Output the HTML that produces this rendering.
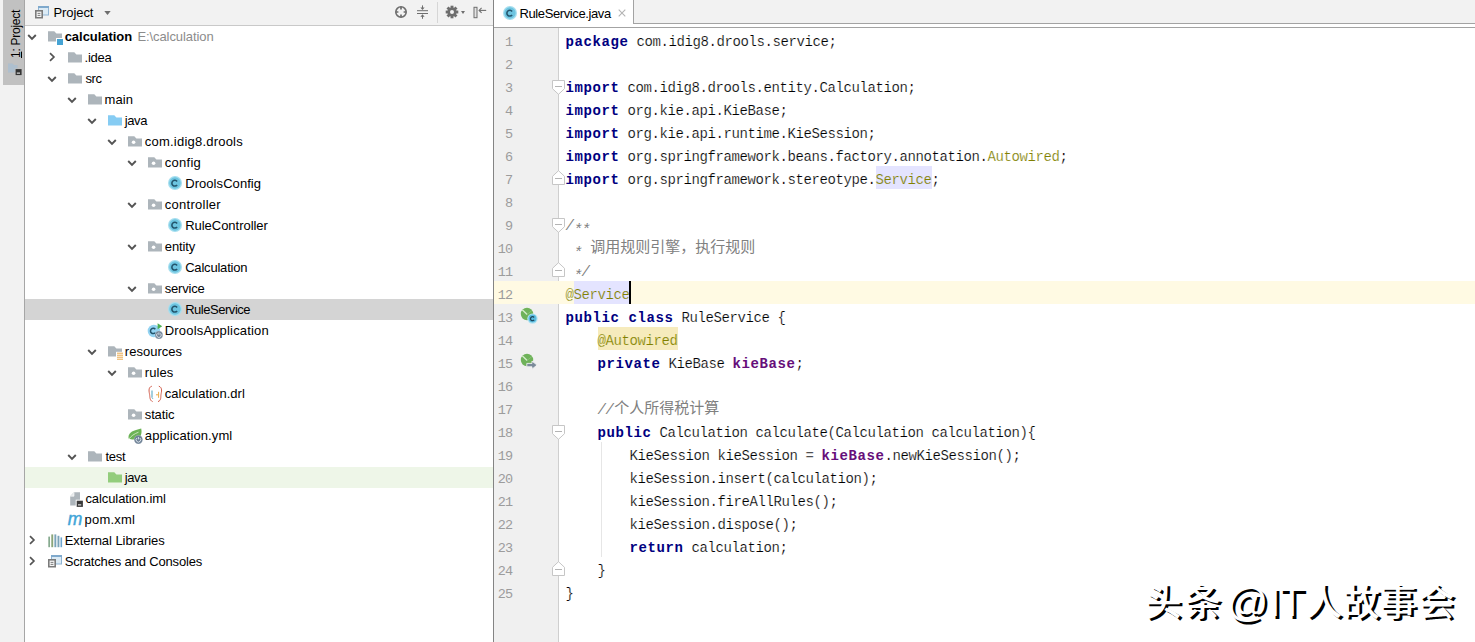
<!DOCTYPE html><html><head><meta charset="utf-8"><title>IDE</title><style>
html,body{margin:0;padding:0;background:#fff}
body{width:1475px;height:642px;position:relative;overflow:hidden;font-family:"Liberation Sans",sans-serif}
.a{position:absolute}
.t{font-size:13px;line-height:21px;height:21px;white-space:pre;color:#000}
.b{font-weight:700}
.cl,.ln{font-family:"Liberation Mono",monospace;font-size:14px;letter-spacing:-0.4px;line-height:29px;height:23px;white-space:pre;color:#000}
.cl>span,.cl{padding-top:0}
.cl{-webkit-text-stroke:0.2px #fff}
.k,.f,.c{-webkit-text-stroke-width:0}
.hl,.hl2{-webkit-text-stroke-color:#e4e4ff}
.hw{-webkit-text-stroke-color:#f6ebbc}
.ln{width:18.2px;text-align:right;color:#9c9c9c;font-size:13.5px;letter-spacing:-0.9px}
.k{color:#000080;font-weight:700;letter-spacing:0.6px}
.an{color:#808000}
.f{color:#660e7a;font-weight:700;letter-spacing:0.6px}
.c{color:#808080;font-style:italic}
.cl span.as{position:relative;top:3.5px;font-size:15px;letter-spacing:-1px;width:8px}
.hl{background:#e4e4ff}
.hl2{background:#e4e4ff}
.hw{background:#f6ebbc}
.cl span{display:inline-block;height:23px;vertical-align:top}
.cj{vertical-align:top;margin-top:3px}
.cj text{font-family:"Liberation Sans","Noto Sans CJK SC",sans-serif;font-size:15px;font-style:normal;font-weight:400;letter-spacing:0;-webkit-text-stroke:0;stroke:none}
.wm{font-family:"Liberation Sans","Noto Sans CJK SC",sans-serif;font-size:37px;font-weight:500;letter-spacing:0}
</style></head><body>
<div class="a" style="left:0;top:0;width:24px;height:642px;background:#f2f2f2"></div>
<div class="a" style="left:3px;top:0;width:21px;height:85px;background:#c1c1c1"></div>
<div class="a" style="left:24px;top:0;width:1px;height:642px;background:#a6a6a6"></div>
<div class="a" id="vtab" style="left:8.6px;top:58.3px;width:0;height:0"><span class="a" style="left:0;top:0;transform-origin:0 0;transform:rotate(-90deg);font-size:12px;line-height:14px;height:14px;white-space:pre;letter-spacing:-0.27px"><u>1</u>: Project</span></div>
<svg class="a" style="left:7.5px;top:62.5px" width="14" height="13" viewBox="0 0 14 13"><path d="M0 0.5H4.5L6 2H9.5V9.5H0Z" fill="#a7bdd2" fill-opacity="0.75"/><rect x="6.8" y="5.3" width="7" height="7" fill="#c2c2c2"/><rect x="7.6" y="6.1" width="6" height="6" fill="#333"/><rect x="8.8" y="9.6" width="3.2" height="1" fill="#fff"/></svg>
<div class="a" style="left:25px;top:0;width:468px;height:25px;background:#f2f2f2"></div>
<div class="a" style="left:25px;top:25px;width:468px;height:1px;background:#c9c9c9"></div>
<svg class="a" style="left:35px;top:5.7px" width="15" height="13" viewBox="0 0 15 13"><rect x="3.5" y="0.5" width="10" height="8.5" fill="#dcebf5" stroke="#8fb4d4" stroke-width="1"/><rect x="3" y="0" width="11" height="2" fill="#7fa9cc"/><rect x="0" y="4" width="8" height="8.5" fill="#7b7b7b"/><rect x="1.6" y="5.6" width="4.8" height="5.4" fill="#f4f4f4"/><path d="M2.6 7.4H5.4M2.6 9.4H5.4" stroke="#6e6e6e" stroke-width="0.9"/></svg>
<span class="a t" id="hproj" style="left:53.54px;top:2px;letter-spacing:-0.090px">Project</span>
<svg class="a" style="left:104px;top:11px" width="7" height="4" viewBox="0 0 7 4"><path d="M0.3 0H6.7L3.5 4Z" fill="#6e6e6e"/></svg>
<svg class="a" style="left:394px;top:5px" width="14" height="14" viewBox="0 0 14 14"><circle cx="7" cy="7" r="5.2" fill="none" stroke="#6e6e6e" stroke-width="1.6"/><path d="M7 1.8V4.4M7 9.6V12.2M1.8 7H4.4M9.6 7H12.2" stroke="#6e6e6e" stroke-width="1.7"/></svg>
<svg class="a" style="left:416px;top:5px" width="13" height="14" viewBox="0 0 13 14"><path d="M1 5.7H12M1 8.5H12" stroke="#6e6e6e" stroke-width="1"/><path d="M6.5 0.4V4M6.5 10.2V13.8" stroke="#6e6e6e" stroke-width="1"/><path d="M4.4 2.4L6.5 4.9L8.6 2.4ZM4.4 11.8L6.5 9.3L8.6 11.8Z" fill="#6e6e6e"/></svg>
<div class="a" style="left:437px;top:2px;width:1px;height:21px;background:#d6d6d6"></div>
<svg class="a" style="left:444.8px;top:4.9px" width="14" height="14" viewBox="-7 -7 14 14"><g fill="#6e6e6e"><rect x="-1.45" y="-6.3" width="2.9" height="3.2" transform="rotate(0)"/><rect x="-1.45" y="-6.3" width="2.9" height="3.2" transform="rotate(45)"/><rect x="-1.45" y="-6.3" width="2.9" height="3.2" transform="rotate(90)"/><rect x="-1.45" y="-6.3" width="2.9" height="3.2" transform="rotate(135)"/><rect x="-1.45" y="-6.3" width="2.9" height="3.2" transform="rotate(180)"/><rect x="-1.45" y="-6.3" width="2.9" height="3.2" transform="rotate(225)"/><rect x="-1.45" y="-6.3" width="2.9" height="3.2" transform="rotate(270)"/><rect x="-1.45" y="-6.3" width="2.9" height="3.2" transform="rotate(315)"/></g><circle r="3.3" fill="none" stroke="#6e6e6e" stroke-width="2.6"/></svg>
<svg class="a" style="left:460.5px;top:11px" width="4" height="3" viewBox="0 0 4 3"><path d="M0 0H4L2 3Z" fill="#6e6e6e"/></svg>
<svg class="a" style="left:473px;top:6px" width="14" height="13" viewBox="0 0 14 13"><rect x="1" y="1.3" width="3" height="10.4" fill="#e4e4e4" stroke="#6e6e6e" stroke-width="1"/><path d="M6.2 4.4H13.2" stroke="#6e6e6e" stroke-width="1.1"/><path d="M8.6 1.9L6.1 4.4L8.6 6.9" stroke="#6e6e6e" stroke-width="1.1" fill="none"/></svg>
<svg class="a" style="left:26.299999999999997px;top:31.700000000000003px" width="12" height="10" viewBox="0 0 12 10"><path d="M2.2 3 L6 6.9 L9.8 3" fill="none" stroke="#545454" stroke-width="1.9"/></svg>
<svg class="a" style="left:48px;top:30.5px" width="18" height="16" viewBox="0 0 18 16"><path d="M0 0.2 H6.3 L8.4 2.4 H14 V10.6 H0 Z" fill="#adb5bb"/><rect x="8" y="7" width="7.5" height="7.5" fill="#fff"/><rect x="9" y="8" width="6" height="6" fill="#45a3d4"/></svg>
<span class="a t b" id="r0" style="left:64.68px;top:26px;letter-spacing:-0.036px">calculation</span>
<span class="a t" id="rpath" style="left:137.42px;top:26px;color:#8c8c8c;letter-spacing:-0.083px">E:\calculation</span>
<svg class="a" style="left:46.6px;top:51.3px" width="10" height="12" viewBox="0 0 10 12"><path d="M3 2.2 L6.9 6 L3 9.8" fill="none" stroke="#545454" stroke-width="1.7"/></svg>
<svg class="a" style="left:68px;top:51.5px" width="18" height="16" viewBox="0 0 18 16"><path d="M0 0.2 H6.3 L8.4 2.4 H14 V10.6 H0 Z" fill="#adb5bb"/></svg>
<span class="a t" id="r1" style="left:84.54px;top:47px;letter-spacing:-0.225px">.idea</span>
<svg class="a" style="left:46.3px;top:73.7px" width="12" height="10" viewBox="0 0 12 10"><path d="M2.2 3 L6 6.9 L9.8 3" fill="none" stroke="#545454" stroke-width="1.9"/></svg>
<svg class="a" style="left:68px;top:72.5px" width="18" height="16" viewBox="0 0 18 16"><path d="M0 0.2 H6.3 L8.4 2.4 H14 V10.6 H0 Z" fill="#adb5bb"/></svg>
<span class="a t" id="r2" style="left:85.44px;top:68px;letter-spacing:-0.360px">src</span>
<svg class="a" style="left:66.3px;top:94.7px" width="12" height="10" viewBox="0 0 12 10"><path d="M2.2 3 L6 6.9 L9.8 3" fill="none" stroke="#545454" stroke-width="1.9"/></svg>
<svg class="a" style="left:88px;top:93.5px" width="18" height="16" viewBox="0 0 18 16"><path d="M0 0.2 H6.3 L8.4 2.4 H14 V10.6 H0 Z" fill="#adb5bb"/></svg>
<span class="a t" id="r3" style="left:104.54px;top:89px;letter-spacing:0.060px">main</span>
<svg class="a" style="left:86.3px;top:115.7px" width="12" height="10" viewBox="0 0 12 10"><path d="M2.2 3 L6 6.9 L9.8 3" fill="none" stroke="#545454" stroke-width="1.9"/></svg>
<svg class="a" style="left:108px;top:114.5px" width="18" height="16" viewBox="0 0 18 16"><path d="M0 0.2 H6.3 L8.4 2.4 H14 V10.6 H0 Z" fill="#86ccf3"/></svg>
<span class="a t" id="r4" style="left:124.70px;top:110px;letter-spacing:-0.360px">java</span>
<svg class="a" style="left:106.3px;top:136.7px" width="12" height="10" viewBox="0 0 12 10"><path d="M2.2 3 L6 6.9 L9.8 3" fill="none" stroke="#545454" stroke-width="1.9"/></svg>
<svg class="a" style="left:128px;top:135.5px" width="18" height="16" viewBox="0 0 18 16"><path d="M0 0.2 H6.3 L8.4 2.4 H14 V10.6 H0 Z" fill="#adb5bb"/><circle cx="5.6" cy="6.3" r="1.8" fill="#fff"/></svg>
<span class="a t" id="r5" style="left:144.80px;top:131px;letter-spacing:0.216px">com.idig8.drools</span>
<svg class="a" style="left:126.30000000000001px;top:157.7px" width="12" height="10" viewBox="0 0 12 10"><path d="M2.2 3 L6 6.9 L9.8 3" fill="none" stroke="#545454" stroke-width="1.9"/></svg>
<svg class="a" style="left:148px;top:156.5px" width="18" height="16" viewBox="0 0 18 16"><path d="M0 0.2 H6.3 L8.4 2.4 H14 V10.6 H0 Z" fill="#adb5bb"/><circle cx="5.6" cy="6.3" r="1.8" fill="#fff"/></svg>
<span class="a t" id="r6" style="left:164.80px;top:152px;letter-spacing:0.252px">config</span>
<svg class="a" style="left:168.2px;top:176.4px" width="14" height="14" viewBox="0 0 14 14"><circle cx="7" cy="7" r="7" fill="#a5deef"/><circle cx="7" cy="7" r="5.7" fill="#6cc4e0"/><path d="M9.1 5.4 A2.9 2.9 0 1 0 9.1 8.9" fill="none" stroke="#23556d" stroke-width="1.6"/></svg>
<span class="a t" id="r7" style="left:185.18px;top:173px;letter-spacing:0.065px">DroolsConfig</span>
<svg class="a" style="left:126.30000000000001px;top:199.7px" width="12" height="10" viewBox="0 0 12 10"><path d="M2.2 3 L6 6.9 L9.8 3" fill="none" stroke="#545454" stroke-width="1.9"/></svg>
<svg class="a" style="left:148px;top:198.5px" width="18" height="16" viewBox="0 0 18 16"><path d="M0 0.2 H6.3 L8.4 2.4 H14 V10.6 H0 Z" fill="#adb5bb"/><circle cx="5.6" cy="6.3" r="1.8" fill="#fff"/></svg>
<span class="a t" id="r8" style="left:164.80px;top:194px;letter-spacing:0.260px">controller</span>
<svg class="a" style="left:168.2px;top:218.4px" width="14" height="14" viewBox="0 0 14 14"><circle cx="7" cy="7" r="7" fill="#a5deef"/><circle cx="7" cy="7" r="5.7" fill="#6cc4e0"/><path d="M9.1 5.4 A2.9 2.9 0 1 0 9.1 8.9" fill="none" stroke="#23556d" stroke-width="1.6"/></svg>
<span class="a t" id="r9" style="left:185.18px;top:215px;letter-spacing:-0.028px">RuleController</span>
<svg class="a" style="left:126.30000000000001px;top:241.7px" width="12" height="10" viewBox="0 0 12 10"><path d="M2.2 3 L6 6.9 L9.8 3" fill="none" stroke="#545454" stroke-width="1.9"/></svg>
<svg class="a" style="left:148px;top:240.5px" width="18" height="16" viewBox="0 0 18 16"><path d="M0 0.2 H6.3 L8.4 2.4 H14 V10.6 H0 Z" fill="#adb5bb"/><circle cx="5.6" cy="6.3" r="1.8" fill="#fff"/></svg>
<span class="a t" id="r10" style="left:164.80px;top:236px;letter-spacing:-0.144px">entity</span>
<svg class="a" style="left:168.2px;top:260.4px" width="14" height="14" viewBox="0 0 14 14"><circle cx="7" cy="7" r="7" fill="#a5deef"/><circle cx="7" cy="7" r="5.7" fill="#6cc4e0"/><path d="M9.1 5.4 A2.9 2.9 0 1 0 9.1 8.9" fill="none" stroke="#23556d" stroke-width="1.6"/></svg>
<span class="a t" id="r11" style="left:185.18px;top:257px;letter-spacing:-0.198px">Calculation</span>
<svg class="a" style="left:126.30000000000001px;top:283.7px" width="12" height="10" viewBox="0 0 12 10"><path d="M2.2 3 L6 6.9 L9.8 3" fill="none" stroke="#545454" stroke-width="1.9"/></svg>
<svg class="a" style="left:148px;top:282.5px" width="18" height="16" viewBox="0 0 18 16"><path d="M0 0.2 H6.3 L8.4 2.4 H14 V10.6 H0 Z" fill="#adb5bb"/><circle cx="5.6" cy="6.3" r="1.8" fill="#fff"/></svg>
<span class="a t" id="r12" style="left:164.80px;top:278px;letter-spacing:-0.210px">service</span>
<div class="a" style="left:25px;top:299px;width:468px;height:21px;background:#d4d4d4"></div>
<svg class="a" style="left:168.2px;top:302.4px" width="14" height="14" viewBox="0 0 14 14"><circle cx="7" cy="7" r="7" fill="#a5deef"/><circle cx="7" cy="7" r="5.7" fill="#6cc4e0"/><path d="M9.1 5.4 A2.9 2.9 0 1 0 9.1 8.9" fill="none" stroke="#23556d" stroke-width="1.6"/></svg>
<span class="a t" id="r13" style="left:185.18px;top:299px;letter-spacing:-0.468px">RuleService</span>
<svg class="a" style="left:147px;top:321.5px" width="18" height="18" viewBox="0 0 18 18"><circle cx="6.9" cy="9" r="6.2" fill="#93d3f2"/><path d="M8.3 7.2 A2.7 2.7 0 1 0 8.3 10.6" fill="none" stroke="#23556d" stroke-width="1.5"/><path d="M10.6 1.2 L15.2 4.2 L10.6 7.2Z" fill="#4caf50"/><circle cx="11.9" cy="13" r="3.9" fill="#6f8296"/><circle cx="11.9" cy="13" r="3.9" fill="none" stroke="#fff" stroke-opacity="0.35" stroke-width="0.6"/><path d="M10.4 11.4 A2.3 2.3 0 1 0 13.4 11.4" fill="none" stroke="#e4ebf2" stroke-width="0.9"/><path d="M11.9 10.4V12.8" stroke="#e4ebf2" stroke-width="0.9"/></svg>
<span class="a t" id="r14" style="left:164.80px;top:320px;letter-spacing:0.169px">DroolsApplication</span>
<svg class="a" style="left:86.3px;top:346.7px" width="12" height="10" viewBox="0 0 12 10"><path d="M2.2 3 L6 6.9 L9.8 3" fill="none" stroke="#545454" stroke-width="1.9"/></svg>
<svg class="a" style="left:108px;top:345.5px" width="18" height="16" viewBox="0 0 18 16"><path d="M0 0.2 H6.3 L8.4 2.4 H14 V10.6 H0 Z" fill="#adb5bb"/><rect x="8" y="5.8" width="8" height="9" fill="#fff"/><path d="M9 7.2H15M9 9.2H15M9 11.2H15M9 13.2H15" stroke="#e8a84c" stroke-width="1"/></svg>
<span class="a t" id="r15" style="left:124.80px;top:341px;letter-spacing:0.022px">resources</span>
<svg class="a" style="left:106.3px;top:367.7px" width="12" height="10" viewBox="0 0 12 10"><path d="M2.2 3 L6 6.9 L9.8 3" fill="none" stroke="#545454" stroke-width="1.9"/></svg>
<svg class="a" style="left:128px;top:366.5px" width="18" height="16" viewBox="0 0 18 16"><path d="M0 0.2 H6.3 L8.4 2.4 H14 V10.6 H0 Z" fill="#adb5bb"/><circle cx="5.6" cy="6.3" r="1.8" fill="#fff"/></svg>
<span class="a t" id="r16" style="left:144.80px;top:362px;letter-spacing:0.045px">rules</span>
<svg class="a" style="left:147px;top:384.5px" width="17" height="18" viewBox="0 0 17 18"><path d="M4.8 1.2 C0.8 2.5 2.2 7 2.6 9.5 C3 12 2.6 15.5 5.6 16.6" fill="none" stroke="#d25a48" stroke-width="1"/><path d="M11.8 1.2 C15.8 2.5 14.4 7 14 9.5 C13.6 12 14.4 15.5 11 16.6" fill="none" stroke="#d25a48" stroke-width="1"/><path d="M5 5.5 V12.5" stroke="#55a8c4" stroke-width="1.1"/><path d="M5 12.5 L6 14" stroke="#55a8c4" stroke-width="0.8"/><path d="M9 9.8H11.2M11.6 6.8V12.8" stroke="#e9a947" stroke-width="1"/></svg>
<span class="a t" id="r17" style="left:164.80px;top:383px;letter-spacing:0.039px">calculation.drl</span>
<svg class="a" style="left:128px;top:408.5px" width="18" height="16" viewBox="0 0 18 16"><path d="M0 0.2 H6.3 L8.4 2.4 H14 V10.6 H0 Z" fill="#adb5bb"/><circle cx="5.6" cy="6.3" r="1.8" fill="#fff"/></svg>
<span class="a t" id="r18" style="left:144.80px;top:404px;letter-spacing:-0.144px">static</span>
<svg class="a" style="left:128px;top:426.5px" width="18" height="18" viewBox="0 0 18 18"><path d="M0.6 11.6 C-0.4 5.5 5 3.6 13.2 1.6 C14.4 6.5 12.6 12.6 5.4 12.6 C3.6 12.6 2.2 12.4 0.6 11.6Z" fill="#6cb356"/><path d="M0.8 12.2 C3 9 6 7 10.5 5.2" stroke="#dff0d6" stroke-width="0.8" fill="none"/><circle cx="10.4" cy="12.6" r="4.3" fill="#6f8296"/><circle cx="10.4" cy="12.6" r="4.3" fill="none" stroke="#fff" stroke-opacity="0.35" stroke-width="0.6"/><path d="M8.9 11.0 A2.3 2.3 0 1 0 11.9 11.0" fill="none" stroke="#e4ebf2" stroke-width="0.9"/><path d="M10.4 10.0V12.4" stroke="#e4ebf2" stroke-width="0.9"/></svg>
<span class="a t" id="r19" style="left:144.80px;top:425px;letter-spacing:0.103px">application.yml</span>
<svg class="a" style="left:66.3px;top:451.7px" width="12" height="10" viewBox="0 0 12 10"><path d="M2.2 3 L6 6.9 L9.8 3" fill="none" stroke="#545454" stroke-width="1.9"/></svg>
<svg class="a" style="left:88px;top:450.5px" width="18" height="16" viewBox="0 0 18 16"><path d="M0 0.2 H6.3 L8.4 2.4 H14 V10.6 H0 Z" fill="#adb5bb"/></svg>
<span class="a t" id="r20" style="left:105.44px;top:446px;letter-spacing:-0.240px">test</span>
<div class="a" style="left:25px;top:467px;width:468px;height:21px;background:#eef6e8"></div>
<svg class="a" style="left:108px;top:471.5px" width="18" height="16" viewBox="0 0 18 16"><path d="M0 0.2 H6.3 L8.4 2.4 H14 V10.6 H0 Z" fill="#93cd7c"/></svg>
<span class="a t" id="r21" style="left:124.70px;top:467px;letter-spacing:-0.360px">java</span>
<svg class="a" style="left:70px;top:491.7px" width="14" height="17" viewBox="0 0 14 17"><path d="M0.2 4.2 L4 0.3 H10 V13.6 H0.2 Z" fill="#adb5bb"/><path d="M0.2 4.2 H4 V0.3Z" fill="#e6e9eb"/><path d="M4 0.3V4.2H0.2" fill="none" stroke="#fff" stroke-width="0.6"/><rect x="5.7" y="7.7" width="8" height="8" fill="#fff"/><rect x="6.7" y="8.7" width="6.2" height="6.2" fill="#3a3a3a"/><rect x="8" y="12.4" width="3.2" height="1" fill="#fff"/></svg>
<span class="a t" id="r22" style="left:85.44px;top:488px;letter-spacing:-0.090px">calculation.iml</span>
<span class="a" style="left:67.7px;top:508.3px;font:italic 400 17.5px 'Liberation Sans',sans-serif;color:#42a5d8;line-height:22px;-webkit-text-stroke:0.45px #42a5d8">m</span>
<span class="a t" id="r23" style="left:84.54px;top:509px;letter-spacing:0.210px">pom.xml</span>
<svg class="a" style="left:26.6px;top:534.3px" width="10" height="12" viewBox="0 0 10 12"><path d="M3 2.2 L6.9 6 L3 9.8" fill="none" stroke="#545454" stroke-width="1.7"/></svg>
<svg class="a" style="left:48px;top:533.5px" width="15" height="14" viewBox="0 0 15 14"><rect x="0.3" y="2.6" width="1.7" height="10.6" fill="#86aa8f"/><rect x="3.3" y="0.4" width="1.9" height="12.8" fill="#8aa57a"/><rect x="6.4" y="0.4" width="1.9" height="12.8" fill="#7aa3b8"/><rect x="9.5" y="1.8" width="1.9" height="11.4" fill="#7aa3b8"/><rect x="12.5" y="3.4" width="1.6" height="9.8" fill="#6fa6cf"/></svg>
<span class="a t" id="r24" style="left:64.68px;top:530px;letter-spacing:-0.064px">External Libraries</span>
<svg class="a" style="left:26.6px;top:555.3px" width="10" height="12" viewBox="0 0 10 12"><path d="M3 2.2 L6.9 6 L3 9.8" fill="none" stroke="#545454" stroke-width="1.7"/></svg>
<svg class="a" style="left:48px;top:555.3px" width="15" height="13" viewBox="0 0 15 13"><rect x="3.5" y="0.5" width="10" height="8.5" fill="#dcebf5" stroke="#8fb4d4" stroke-width="1"/><rect x="3" y="0" width="11" height="2" fill="#7fa9cc"/><rect x="0" y="4" width="8" height="8.5" fill="#7b7b7b"/><rect x="1.6" y="5.6" width="4.8" height="5.4" fill="#f4f4f4"/><path d="M2.6 7.4H5.4M2.6 9.4H5.4" stroke="#6e6e6e" stroke-width="0.9"/></svg>
<span class="a t" id="r25" style="left:64.68px;top:551px;letter-spacing:-0.154px">Scratches and Consoles</span>
<div class="a" style="left:493px;top:0;width:1px;height:642px;background:#848484"></div>
<div class="a" style="left:494px;top:0;width:981px;height:23px;background:#f2f2f2"></div>
<div class="a" style="left:494px;top:23px;width:981px;height:1px;background:#a3a3a3"></div>
<div class="a" style="left:494px;top:0;width:139px;height:27px;background:#fff"></div>
<div class="a" style="left:633px;top:0;width:1px;height:24px;background:#a3a3a3"></div>
<div class="a" style="left:494px;top:27px;width:981px;height:1px;background:#a3a3a3"></div>
<svg class="a" style="left:502.9px;top:5.7px" width="14" height="14" viewBox="0 0 14 14"><circle cx="7" cy="7" r="7" fill="#a5deef"/><circle cx="7" cy="7" r="5.7" fill="#6cc4e0"/><path d="M9.1 5.4 A2.9 2.9 0 1 0 9.1 8.9" fill="none" stroke="#23556d" stroke-width="1.6"/></svg>
<span class="a t" id="tabt" style="left:519.54px;top:3px;letter-spacing:-0.396px">RuleService.java</span>
<svg class="a" style="left:618px;top:9px" width="8" height="8" viewBox="0 0 8 8"><path d="M0.7 0.7L7.3 7.3M7.3 0.7L0.7 7.3" stroke="#b4b4b4" stroke-width="1.1"/></svg>
<div class="a" style="left:494px;top:28px;width:64px;height:614px;background:#f0f0f0"></div>
<div class="a" style="left:558px;top:28px;width:1px;height:614px;background:#cfcfcf"></div>
<div class="a ln" style="left:494px;top:28px">1</div>
<div class="a cl" style="left:565.5px;top:28px"><span class="k">package</span> com.idig8.drools.service;</div>
<div class="a ln" style="left:494px;top:51px">2</div>
<div class="a cl" style="left:565.5px;top:51px"></div>
<div class="a ln" style="left:494px;top:74px">3</div>
<div class="a cl" style="left:565.5px;top:74px"><span class="k">import</span> com.idig8.drools.entity.Calculation;</div>
<div class="a ln" style="left:494px;top:97px">4</div>
<div class="a cl" style="left:565.5px;top:97px"><span class="k">import</span> org.kie.api.KieBase;</div>
<div class="a ln" style="left:494px;top:120px">5</div>
<div class="a cl" style="left:565.5px;top:120px"><span class="k">import</span> org.kie.api.runtime.KieSession;</div>
<div class="a ln" style="left:494px;top:143px">6</div>
<div class="a cl" style="left:565.5px;top:143px"><span class="k">import</span> org.springframework.beans.factory.annotation.<span class="an">Autowired</span>;</div>
<div class="a ln" style="left:494px;top:166px">7</div>
<div class="a cl" style="left:565.5px;top:166px"><span class="k">import</span> org.springframework.stereotype.<span class="an hl">Service</span>;</div>
<div class="a ln" style="left:494px;top:189px">8</div>
<div class="a cl" style="left:565.5px;top:189px"></div>
<div class="a ln" style="left:494px;top:212px">9</div>
<div class="a cl" style="left:565.5px;top:212px"><span class="c">/</span><span class="c as">**</span></div>
<div class="a ln" style="left:494px;top:235px">10</div>
<div class="a cl" style="left:565.5px;top:235px"><span class="c"> </span><span class="c as">*</span><span class="c"> </span><svg class="cj" width="165" height="19" viewBox="0 0 165 19" fill="#808080"><text x="0.3" y="14.3" fill="#808080">调用规则引擎，执行规则</text></svg></div>
<div class="a ln" style="left:494px;top:258px">11</div>
<div class="a cl" style="left:565.5px;top:258px"><span class="c"> </span><span class="c as">*</span><span class="c">/</span></div>
<div class="a" style="left:494px;top:281px;width:981px;height:23px;background:#fffae3"></div>
<div class="a ln" style="left:494px;top:281px">12</div>
<div class="a cl" style="left:565.5px;top:281px;-webkit-text-stroke-color:#fffae3"><span class="an">@</span><span class="an hl2">Service</span></div>
<div class="a ln" style="left:494px;top:304px">13</div>
<div class="a cl" style="left:565.5px;top:304px"><span class="k">public class</span> RuleService {</div>
<div class="a ln" style="left:494px;top:327px">14</div>
<div class="a cl" style="left:565.5px;top:327px">    <span class="an hw">@Autowired</span></div>
<div class="a ln" style="left:494px;top:350px">15</div>
<div class="a cl" style="left:565.5px;top:350px">    <span class="k">private</span> KieBase <span class="f">kieBase</span>;</div>
<div class="a ln" style="left:494px;top:373px">16</div>
<div class="a cl" style="left:565.5px;top:373px"></div>
<div class="a ln" style="left:494px;top:396px">17</div>
<div class="a cl" style="left:565.5px;top:396px">    <span class="c">//</span><svg class="cj" width="105" height="19" viewBox="0 0 105 19" fill="#808080"><text x="0.3" y="14.3" fill="#808080">个人所得税计算</text></svg></div>
<div class="a ln" style="left:494px;top:419px">18</div>
<div class="a cl" style="left:565.5px;top:419px">    <span class="k">public</span> Calculation calculate(Calculation calculation){</div>
<div class="a ln" style="left:494px;top:442px">19</div>
<div class="a cl" style="left:565.5px;top:442px">        KieSession kieSession = <span class="f">kieBase</span>.newKieSession();</div>
<div class="a ln" style="left:494px;top:465px">20</div>
<div class="a cl" style="left:565.5px;top:465px">        kieSession.insert(calculation);</div>
<div class="a ln" style="left:494px;top:488px">21</div>
<div class="a cl" style="left:565.5px;top:488px">        kieSession.fireAllRules();</div>
<div class="a ln" style="left:494px;top:511px">22</div>
<div class="a cl" style="left:565.5px;top:511px">        kieSession.dispose();</div>
<div class="a ln" style="left:494px;top:534px">23</div>
<div class="a cl" style="left:565.5px;top:534px">        <span class="k">return</span> calculation;</div>
<div class="a ln" style="left:494px;top:557px">24</div>
<div class="a cl" style="left:565.5px;top:557px">    }</div>
<div class="a ln" style="left:494px;top:580px">25</div>
<div class="a cl" style="left:565.5px;top:580px">}</div>
<div class="a" style="left:629px;top:281px;width:2px;height:23px;background:#000"></div>
<svg class="a" style="left:552.0px;top:80.0px" width="13" height="15" viewBox="0 0 13 15"><path d="M0.5 0.5H12.5V8.7L6.5 14.3L0.5 8.7Z" fill="#fff" stroke="#c6c6c6"/><path d="M3 6.5H10" stroke="#b4b4b4"/></svg>
<svg class="a" style="left:552.0px;top:218.0px" width="13" height="15" viewBox="0 0 13 15"><path d="M0.5 0.5H12.5V8.7L6.5 14.3L0.5 8.7Z" fill="#fff" stroke="#c6c6c6"/><path d="M3 6.5H10" stroke="#b4b4b4"/></svg>
<svg class="a" style="left:552.0px;top:425.0px" width="13" height="15" viewBox="0 0 13 15"><path d="M0.5 0.5H12.5V8.7L6.5 14.3L0.5 8.7Z" fill="#fff" stroke="#c6c6c6"/><path d="M3 6.5H10" stroke="#b4b4b4"/></svg>
<svg class="a" style="left:552.0px;top:170.0px" width="13" height="15" viewBox="0 0 13 15"><path d="M0.5 14.5H12.5V6.3L6.5 0.7L0.5 6.3Z" fill="#fff" stroke="#c6c6c6"/><path d="M3 8.5H10" stroke="#b4b4b4"/></svg>
<svg class="a" style="left:552.0px;top:262.0px" width="13" height="15" viewBox="0 0 13 15"><path d="M0.5 14.5H12.5V6.3L6.5 0.7L0.5 6.3Z" fill="#fff" stroke="#c6c6c6"/><path d="M3 8.5H10" stroke="#b4b4b4"/></svg>
<svg class="a" style="left:552.0px;top:561.0px" width="13" height="15" viewBox="0 0 13 15"><path d="M0.5 14.5H12.5V6.3L6.5 0.7L0.5 6.3Z" fill="#fff" stroke="#c6c6c6"/><path d="M3 8.5H10" stroke="#b4b4b4"/></svg>
<div class="a" style="left:601px;top:442px;width:1px;height:115px;background:#e6e6e6"></div>
<svg class="a" style="left:520.1px;top:307px" width="19" height="18" viewBox="0 0 19 18"><circle cx="7" cy="7" r="6.2" fill="#6fb25a"/><path d="M2.2 2.8 L7.2 7.4" stroke="#d6edcb" stroke-width="1.3"/><path d="M7.2 7.4 L12 3.4" stroke="#8cc77a" stroke-width="0.8"/><circle cx="12.5" cy="11.6" r="5.2" fill="#b4e4f2"/><circle cx="12.5" cy="11.6" r="4" fill="#5bbce0"/><path d="M14.1 10.5 A2 2 0 1 0 14.1 12.9" fill="none" stroke="#1d4a60" stroke-width="1.3"/></svg>
<svg class="a" style="left:520.1px;top:353.2px" width="19" height="18" viewBox="0 0 19 18"><circle cx="7" cy="7" r="6.2" fill="#6fb25a"/><path d="M2.2 2.8 L7.2 7.4" stroke="#d6edcb" stroke-width="1.3"/><path d="M7.2 7.4 L12 3.4" stroke="#8cc77a" stroke-width="0.8"/><path d="M6.8 10.4H12V8L17 12.1L12 16.2V13.8H6.8Z" fill="#7b8b9a" stroke="#f0f0f0" stroke-width="0.9"/></svg>
<svg class="a" style="left:0;top:0" width="1475" height="642" viewBox="0 0 1475 642"><g fill="#000" transform="translate(2.8 2.8)"><text class="wm" x="1144.5" y="615.5">头</text><text class="wm" x="1184" y="615.5">条</text><text class="wm" x="1305" y="615.5">人</text><text class="wm" x="1342.7" y="615.5">故</text><text class="wm" x="1379.5" y="615.5">事</text><text class="wm" x="1417.5" y="615.5">会</text><text transform="translate(1226.50 615.80) scale(1.0 1)" font-family="Liberation Sans" font-size="41">@</text><text transform="translate(1269.00 615.80) scale(1.0 1)" font-family="Liberation Sans" font-size="41">I</text><text transform="translate(1279.30 615.80) scale(1.0 1)" font-family="Liberation Sans" font-size="41">T</text></g><g fill="#fff"><text class="wm" x="1144.5" y="615.5">头</text><text class="wm" x="1184" y="615.5">条</text><text class="wm" x="1305" y="615.5">人</text><text class="wm" x="1342.7" y="615.5">故</text><text class="wm" x="1379.5" y="615.5">事</text><text class="wm" x="1417.5" y="615.5">会</text><text transform="translate(1226.50 615.80) scale(1.0 1)" font-family="Liberation Sans" font-size="41">@</text><text transform="translate(1269.00 615.80) scale(1.0 1)" font-family="Liberation Sans" font-size="41">I</text><text transform="translate(1279.30 615.80) scale(1.0 1)" font-family="Liberation Sans" font-size="41">T</text></g></svg>
</body></html>
